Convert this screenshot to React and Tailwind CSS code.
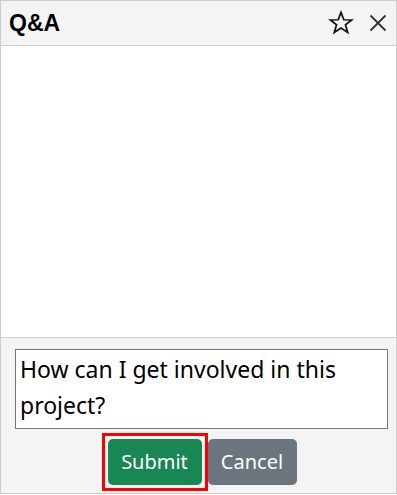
import React, { useState } from "react";

const StarIcon = () => (
  <svg width="26" height="26" viewBox="0 0 24 24" fill="none" stroke="#111" strokeWidth="1.6" strokeLinejoin="miter">
    <polygon points="12,2.2 14.6,9 21.8,9.2 16.1,13.7 18.2,20.8 12,16.6 5.8,20.8 7.9,13.7 2.2,9.2 9.4,9" />
  </svg>
);

const CloseIcon = () => (
  <svg width="18" height="18" viewBox="0 0 18 18" stroke="#333" strokeWidth="1.8" strokeLinecap="butt">
    <line x1="1.5" y1="1.5" x2="16.5" y2="16.5" />
    <line x1="16.5" y1="1.5" x2="1.5" y2="16.5" />
  </svg>
);

const App = () => {
  const [question, setQuestion] = useState("How can I get involved in this project?");

  return (
    <div className="w-[397px] h-[494px] flex flex-col border border-[#cccccc] bg-white">
      <div className="h-[45px] flex items-center justify-between bg-[#f4f4f4] border-b border-[#cccccc] pl-[8px] pr-[9px]">
        <h2 className="text-[23px] font-bold text-black font-['Liberation_Sans',Arial,sans-serif]">Q&amp;A</h2>
        <div className="flex items-center gap-[15px]">
          <button className="flex items-center">
            <StarIcon />
          </button>
          <button className="flex items-center">
            <CloseIcon />
          </button>
        </div>
      </div>

      <div className="flex-1 bg-white"></div>

      <div className="h-[156px] bg-[#f4f4f4] border-t border-[#cccccc] flex flex-col pt-[11px]">
        <textarea
          value={question}
          onChange={(e) => setQuestion(e.target.value)}
          className="w-[373px] h-[80px] ml-[14px] border border-[#767676] bg-white px-[4px] py-[1px] text-[23px] leading-[36px] text-black resize-none outline-none font-['Noto_Sans',sans-serif]"
        />
        <div className="flex justify-center mt-[4px] ml-[1px]">
          <div className="border-[3px] border-[#ff0000] p-[3px]">
            <button className="w-[94px] h-[46px] rounded-[5px] bg-[#198754] text-white text-[20px] font-['Noto_Sans',sans-serif]">
              Submit
            </button>
          </div>
          <button className="w-[89px] h-[46px] mt-[6px] rounded-[5px] bg-[#6c757d] text-white text-[20px] font-['Noto_Sans',sans-serif]">
            Cancel
          </button>
        </div>
      </div>
    </div>
  );
};

export default App;
